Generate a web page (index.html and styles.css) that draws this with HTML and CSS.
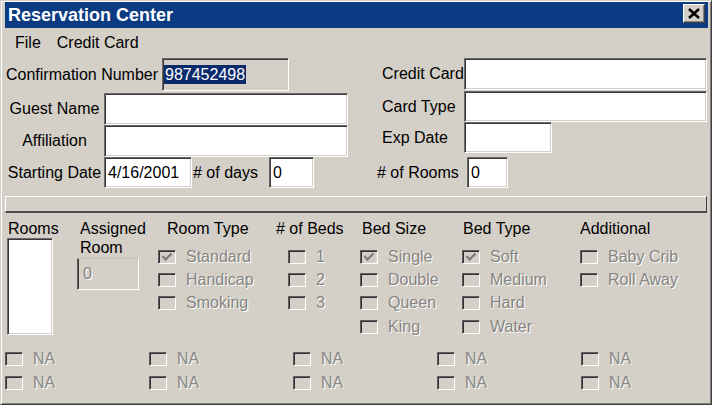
FILE: index.html
```html
<!DOCTYPE html>
<html lang="en">
<head>
  <meta charset="UTF-8">
  <title>Reservation Center</title>
  <link rel="stylesheet" href="styles.css">
</head>
<body>

  <div class="window">
    <div class="titlebar">
      <span class="title">Reservation Center</span>
      <div class="close-btn">
        <svg width="14" height="11" viewBox="0 0 14 11"><path d="M2 1 L12 10 M12 1 L2 10" stroke="#000" stroke-width="2.6" fill="none"/></svg>
      </div>
    </div>

    <div class="menubar">
      <span>File</span>
      <span>Credit Card</span>
    </div>

    <div class="details">
      <div class="guest">
        <div class="row row-confirm">
          <div class="lbl lbl-confirm">Confirmation Number</div>
          <div class="field readonly w-confirm"><span class="selected">987452498</span></div>
        </div>
        <div class="row row-name">
          <div class="lbl lbl-center">Guest Name</div>
          <div class="field w-name"></div>
        </div>
        <div class="row row-aff">
          <div class="lbl lbl-center">Affiliation</div>
          <div class="field w-name"></div>
        </div>
        <div class="row row-date">
          <div class="lbl lbl-center">Starting Date</div>
          <div class="field w-date">4/16/2001</div>
          <div class="lbl lbl-days"># of days</div>
          <div class="field w-days">0</div>
        </div>
      </div>

      <div class="card">
        <div class="row row-cc">
          <div class="lbl lbl-card">Credit Card</div>
          <div class="field w-card"></div>
        </div>
        <div class="row row-type">
          <div class="lbl lbl-card">Card Type</div>
          <div class="field w-card"></div>
        </div>
        <div class="row row-exp">
          <div class="lbl lbl-card">Exp Date</div>
          <div class="field w-exp"></div>
        </div>
        <div class="row row-rooms">
          <div class="lbl lbl-rooms"># of Rooms</div>
          <div class="field w-rooms">0</div>
        </div>
      </div>
    </div>

    <div class="bar"></div>

    <div class="rooms">
      <div class="col">
        <div class="head pad-3">Rooms</div>
        <div class="listbox"></div>
      </div>
      <div class="col">
        <div class="head pad-3">Assigned<br>Room</div>
        <div class="field disabled w-assigned">0</div>
      </div>
      <div class="col">
        <div class="head pad-9">Room Type</div>
        <div class="options">
          <div class="opt"><span class="check"><svg width="14" height="10" viewBox="0 0 14 10"><path d="M2.5 4 L5.5 7.5 L11.5 1.5" stroke="#808080" stroke-width="2.4" fill="none"/></svg></span>Standard</div>
          <div class="opt"><span class="check"></span>Handicap</div>
          <div class="opt"><span class="check"></span>Smoking</div>
        </div>
      </div>
      <div class="col">
        <div class="head"># of Beds</div>
        <div class="options pad-12">
          <div class="opt"><span class="check"></span>1</div>
          <div class="opt"><span class="check"></span>2</div>
          <div class="opt"><span class="check"></span>3</div>
        </div>
      </div>
      <div class="col">
        <div class="head pad-2">Bed Size</div>
        <div class="options">
          <div class="opt"><span class="check"><svg width="14" height="10" viewBox="0 0 14 10"><path d="M2.5 4 L5.5 7.5 L11.5 1.5" stroke="#808080" stroke-width="2.4" fill="none"/></svg></span>Single</div>
          <div class="opt"><span class="check"></span>Double</div>
          <div class="opt"><span class="check"></span>Queen</div>
          <div class="opt"><span class="check"></span>King</div>
        </div>
      </div>
      <div class="col">
        <div class="head pad-1">Bed Type</div>
        <div class="options">
          <div class="opt"><span class="check"><svg width="14" height="10" viewBox="0 0 14 10"><path d="M2.5 4 L5.5 7.5 L11.5 1.5" stroke="#808080" stroke-width="2.4" fill="none"/></svg></span>Soft</div>
          <div class="opt"><span class="check"></span>Medium</div>
          <div class="opt"><span class="check"></span>Hard</div>
          <div class="opt"><span class="check"></span>Water</div>
        </div>
      </div>
      <div class="col">
        <div class="head">Additional</div>
        <div class="options">
          <div class="opt"><span class="check"></span>Baby Crib</div>
          <div class="opt"><span class="check"></span>Roll Away</div>
        </div>
      </div>
    </div>

    <div class="extras">
      <div class="opt"><span class="check"></span>NA</div>
      <div class="opt"><span class="check"></span>NA</div>
      <div class="opt"><span class="check"></span>NA</div>
      <div class="opt"><span class="check"></span>NA</div>
      <div class="opt"><span class="check"></span>NA</div>
      <div class="opt"><span class="check"></span>NA</div>
      <div class="opt"><span class="check"></span>NA</div>
      <div class="opt"><span class="check"></span>NA</div>
      <div class="opt"><span class="check"></span>NA</div>
      <div class="opt"><span class="check"></span>NA</div>
    </div>
  </div>

</body>
</html>
```

FILE: styles.css
```css
body {
  margin: 0;
  background: #fff;
  font-family: "Liberation Sans", Arial, sans-serif;
  font-size: 16px;
  color: #000;
}
.window {
  width: 712px;
  height: 405px;
  box-sizing: border-box;
  background: #d4d0c8;
  border: 1px solid;
  border-color: #d4d0c8 #404040 #404040 #d4d0c8;
  box-shadow: inset 1px 1px 0 #fff, inset -1px -1px 0 #808080;
  padding: 1px 3px 0 4px;
}
.titlebar {
  height: 26px;
  background: #0b3c83;
  display: flex;
  justify-content: space-between;
  padding: 0 3px;
}
.title {
  color: #fff;
  font-weight: bold;
  font-size: 18px;
  line-height: 26px;
}
.close-btn {
  width: 22px;
  height: 19px;
  margin-top: 2px;
  box-sizing: border-box;
  background: #d4d0c8;
  border: 1px solid;
  border-color: #fff #404040 #404040 #fff;
  box-shadow: inset -1px -1px 0 #808080;
  display: flex;
  align-items: center;
  justify-content: center;
}
.menubar {
  height: 30px;
  display: flex;
  align-items: center;
  gap: 16px;
  padding-left: 10px;
}

/* guest and card details */
.details {
  display: grid;
  grid-template-columns: 372px 1fr;
  height: 130px;
}
.row {
  display: flex;
  align-items: center;
}
.lbl {
  white-space: nowrap;
  box-sizing: border-box;
}
.field {
  box-sizing: border-box;
  height: 100%;
  background: #fff;
  border: 1px solid;
  border-color: #6a6a6a #fff #fff #6a6a6a;
  box-shadow: inset 1px 1px 0 #383838, inset -1px -1px 0 #d4d0c8;
  display: flex;
  align-items: center;
  padding-left: 3px;
}
.field.readonly {
  background: #d4d0c8;
  padding-left: 1px;
}
.selected {
  background: #0a2a6c;
  color: #fff;
  line-height: 19px;
  padding: 0 1px;
}
.row-confirm { height: 33px; }
.row-name { height: 32px; margin-top: 2px; }
.row-aff { height: 32px; }
.row-date { height: 31px; }
.lbl-confirm { width: 157px; padding-left: 1px; }
.lbl-center { width: 99px; text-align: center; }
.lbl-days { width: 76px; margin-left: 1px; }
.w-confirm { width: 127px; }
.w-name { width: 244px; }
.w-date { width: 88px; }
.w-days { width: 45px; }

.row-cc { height: 32px; }
.row-type { height: 31px; margin-top: 1px; }
.row-exp { height: 31px; }
.row-rooms { height: 31px; margin-top: 4px; }
.lbl-card { width: 87px; padding-left: 5px; }
.lbl-rooms { width: 90px; }
.w-card { width: 243px; }
.w-exp { width: 88px; }
.w-rooms { width: 41px; }

.bar {
  height: 14px;
  margin: 8px 1px 0 0;
  border-top: 1px solid #fff;
  border-left: 1px solid #fff;
  border-right: 1px solid #404040;
  border-bottom: 2px solid #4a4a4a;
}

/* room options */
.rooms {
  display: grid;
  grid-template-columns: 72px 81px 118px 84px 102px 118px 1fr;
  height: 134px;
  box-sizing: border-box;
  padding-top: 6px;
}
.head {
  line-height: 19px;
  white-space: nowrap;
}
.pad-1 { padding-left: 1px; }
.pad-2 { padding-left: 2px; }
.pad-3 { padding-left: 3px; }
.pad-9 { padding-left: 9px; }
.pad-12 { padding-left: 12px; }
.listbox {
  width: 46px;
  height: 97px;
  margin-left: 2px;
  box-sizing: border-box;
  background: #fff;
  border: 1px solid;
  border-color: #6a6a6a #fff #fff #6a6a6a;
  box-shadow: inset 1px 1px 0 #383838, inset -1px -1px 0 #d4d0c8;
}
.field.disabled {
  background: #d4d0c8;
  color: #808080;
  text-shadow: 1px 1px 0 #fff;
  padding-left: 5px;
  margin-top: 1px;
  border-color: #c4c0b8 #fff #fff #5a5a5a;
  box-shadow: inset 1px 0 0 #383838;
}
.w-assigned { width: 62px; height: 32px; }
.options {
  margin-top: 7px;
}
.opt {
  display: flex;
  align-items: center;
  gap: 10px;
  height: 23.4px;
  color: #858581;
  text-shadow: 1px 1px 0 #fff;
  white-space: nowrap;
}
.check {
  width: 18px;
  height: 14px;
  flex: none;
  box-sizing: border-box;
  background: #d4d0c8;
  border: 1px solid;
  border-color: #5e5e5e #fff #fff #5e5e5e;
  box-shadow: inset 1px 1px 0 #303030, inset -1px -1px 0 #d4d0c8;
  display: flex;
  align-items: center;
  justify-content: center;
}
.extras {
  display: grid;
  grid-template-columns: repeat(5, 144px);
  grid-auto-rows: 24px;
}
.extras .opt {
  height: 24px;
}
```
